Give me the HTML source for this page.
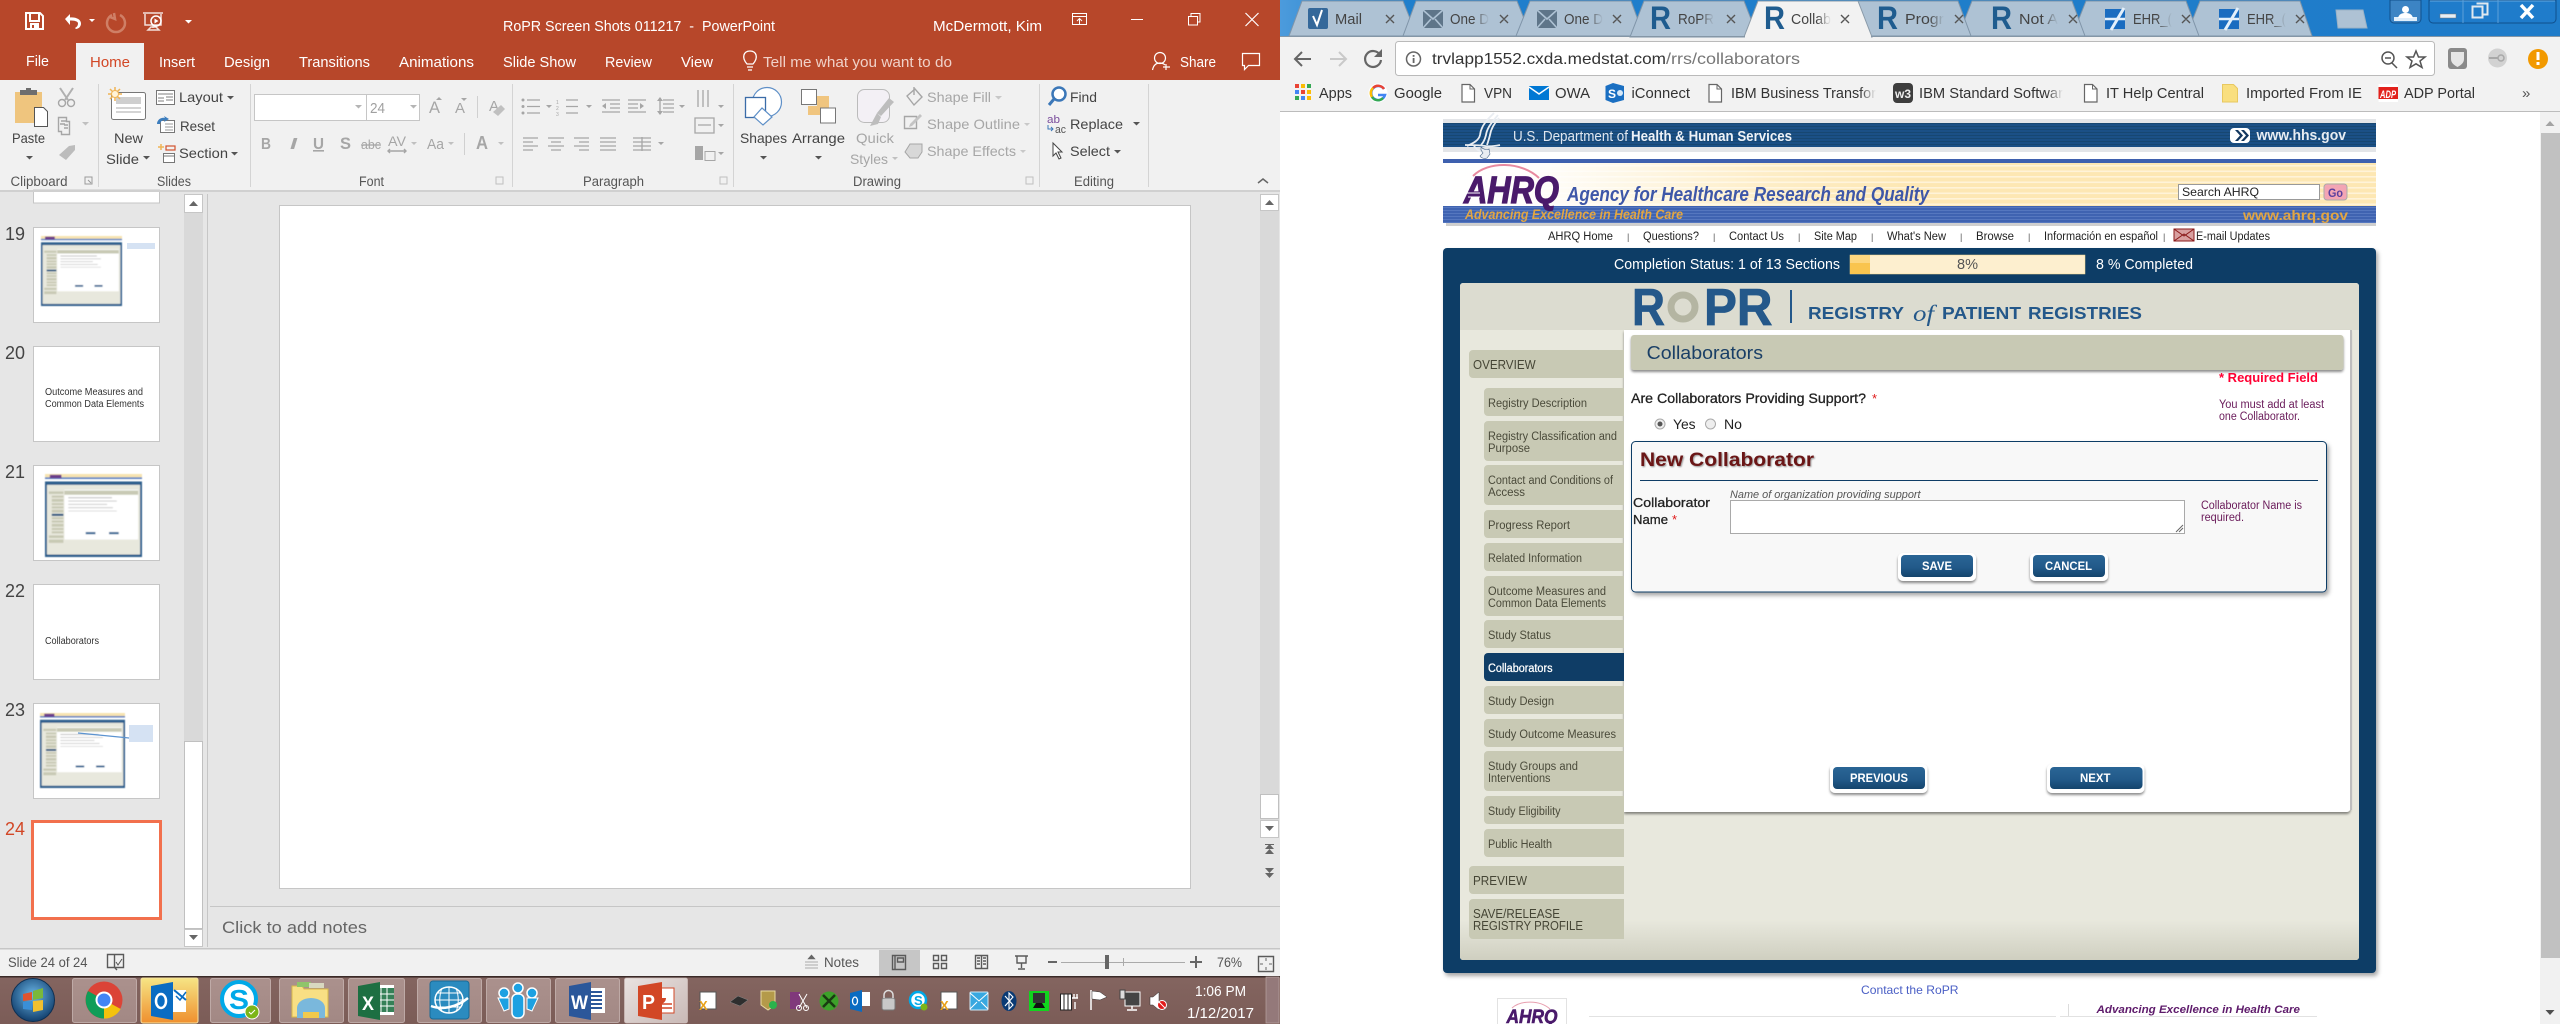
<!DOCTYPE html>
<html lang="en"><head><meta charset="utf-8"><title>RoPR Screen Shots</title>
<style>
html,body{margin:0;padding:0;background:#fff;overflow:hidden;width:2560px;height:1024px}
svg{display:block;font-family:"Liberation Sans",sans-serif}
.w{fill:#fff}.rb{font-size:14px;fill:#444}.dis{font-size:14px;fill:#a6a6a6}.lb{font-size:13.5px;fill:#555}
.tab{font-size:14.5px;fill:#fff}.ct{font-size:14.5px;fill:#444}.bm{font-size:14.5px;fill:#333}
.nav{font-size:11.5px;fill:#222}.sep{font-size:9px;fill:#555}.side{font-size:11.5px;fill:#4a4a3a}.main{font-size:12.5px;fill:#454535}
.btn{font-size:11.5px;font-weight:bold;fill:#fff}.g{fill:#a6a6a6}.ln{fill:none;stroke:#a6a6a6;stroke-width:1.4}.dk{fill:none;stroke:#5a5a5a;stroke-width:1.4}
.num{font-size:18px;fill:#444}.lab{fill:#222;stroke:#222;stroke-width:.3}
</style></head><body>
<svg width="2560" height="1024" viewBox="0 0 2560 1024" xmlns="http://www.w3.org/2000/svg">
<defs>
<linearGradient id="chr" x1="0" x2="1" y1="0" y2="0"><stop offset="0" stop-color="#4c9bdc"/><stop offset=".08" stop-color="#1f7fcc"/><stop offset="1" stop-color="#1f7cc9"/></linearGradient>
<linearGradient id="btn" x1="0" x2="0" y1="0" y2="1"><stop offset="0" stop-color="#2a6595"/><stop offset=".55" stop-color="#225a8a"/><stop offset="1" stop-color="#14446c"/></linearGradient>
<linearGradient id="fade" x1="0" x2="1" y1="0" y2="0"><stop offset="0" stop-color="#aec2d4" stop-opacity="0"/><stop offset="1" stop-color="#aec2d4"/></linearGradient>
<linearGradient id="fadew" x1="0" x2="1" y1="0" y2="0"><stop offset="0" stop-color="#f2f2f2" stop-opacity="0"/><stop offset="1" stop-color="#f2f2f2"/></linearGradient>
<linearGradient id="fadeb" x1="0" x2="1" y1="0" y2="0"><stop offset="0" stop-color="#f2f2f2" stop-opacity="0"/><stop offset="1" stop-color="#f2f2f2"/></linearGradient>
<linearGradient id="yel" x1="0" x2="1" y1="0" y2="0"><stop offset="0" stop-color="#fff"/><stop offset=".1" stop-color="#fff" stop-opacity=".95"/><stop offset=".35" stop-color="#fff" stop-opacity=".25"/><stop offset=".5" stop-color="#fff" stop-opacity="0"/></linearGradient>
<linearGradient id="pbot" x1="0" x2="0" y1="0" y2="1"><stop offset="0" stop-color="#e8e8dd"/><stop offset="1" stop-color="#cfcfc0"/></linearGradient>
<linearGradient id="task" x1="0" x2="0" y1="0" y2="1"><stop offset="0" stop-color="#846560"/><stop offset="1" stop-color="#7b5c57"/></linearGradient>
<linearGradient id="tb" x1="0" x2="0" y1="0" y2="1"><stop offset="0" stop-color="#ab918d"/><stop offset="1" stop-color="#a28884"/></linearGradient>
<linearGradient id="olk" x1="0" x2="0" y1="0" y2="1"><stop offset="0" stop-color="#f6e585"/><stop offset="1" stop-color="#ef8f2e"/></linearGradient>
<linearGradient id="ppb" x1="0" x2="1" y1="0" y2="1"><stop offset="0" stop-color="#e9e2e0"/><stop offset="1" stop-color="#c9b9b6"/></linearGradient>
<radialGradient id="orb" cx=".5" cy=".4" r=".6"><stop offset="0" stop-color="#6bb7e8"/><stop offset="1" stop-color="#123f6d"/></radialGradient>
<pattern id="st" width="8" height="5.5" patternUnits="userSpaceOnUse"><rect width="8" height="5.5" fill="#fde7b3"/><rect y="0" width="8" height="1.6" fill="#fff3d8"/></pattern>
<pattern id="bl" width="8" height="3" patternUnits="userSpaceOnUse"><rect width="8" height="3" fill="#3f63b1"/><rect width="8" height="1" fill="#5577bf"/></pattern>
<pattern id="hh" width="8" height="3" patternUnits="userSpaceOnUse"><rect width="8" height="3" fill="#1b5086"/><rect width="8" height="1" fill="#174772"/></pattern>
<filter id="sd" x="-5%" y="-5%" width="112%" height="115%"><feDropShadow dx="2" dy="3" stdDeviation="2" flood-color="#000" flood-opacity=".35"/></filter>
<filter id="sd2" x="-10%" y="-20%" width="120%" height="150%"><feDropShadow dx="0" dy="2" stdDeviation="1.2" flood-color="#000" flood-opacity=".45"/></filter>
<filter id="ts" x="-5%" y="-20%" width="110%" height="150%"><feDropShadow dx="1" dy="1" stdDeviation=".8" flood-color="#000" flood-opacity=".4"/></filter>
<filter id="bl1"><feGaussianBlur stdDeviation=".5"/></filter>
<filter id="bl2"><feGaussianBlur stdDeviation=".3"/></filter>
<symbol id="mini" viewBox="0 0 100 100" preserveAspectRatio="none">
<rect width="100" height="4" fill="#f7e3b0"/><rect y="4" width="100" height="2" fill="#5b7fc0"/><rect x="5" y="1" width="12" height="4" fill="#6a3a8a"/>
<rect y="9" width="100" height="91" fill="#2d5f8d"/><rect x="2" y="13" width="96" height="84" fill="#e8e8dd"/>
<rect x="20" y="19" width="76" height="60" fill="#fff"/><rect x="20" y="20" width="76" height="5" fill="#c8c9b4"/>
<rect x="4" y="21" width="15" height="3" fill="#c8c9b4"/><rect x="7" y="26" width="12" height="2.5" fill="#c8c9b4"/><rect x="7" y="30" width="12" height="3.5" fill="#c8c9b4"/><rect x="7" y="35" width="12" height="2.5" fill="#c8c9b4"/><rect x="7" y="39" width="12" height="2.5" fill="#c8c9b4"/><rect x="7" y="43" width="12" height="3.5" fill="#c8c9b4"/><rect x="7" y="48" width="12" height="2.5" fill="#1d4f7c"/><rect x="7" y="52" width="12" height="2.5" fill="#c8c9b4"/><rect x="7" y="56" width="12" height="2.5" fill="#c8c9b4"/><rect x="7" y="60" width="12" height="3.5" fill="#c8c9b4"/><rect x="7" y="65" width="12" height="2.5" fill="#c8c9b4"/><rect x="7" y="69" width="12" height="2.5" fill="#c8c9b4"/><rect x="4" y="74" width="15" height="3" fill="#c8c9b4"/><rect x="4" y="79" width="15" height="4" fill="#c8c9b4"/>
<rect x="24" y="28" width="45" height="1.2" fill="#bbb"/><rect x="24" y="32" width="50" height="1.2" fill="#ccc"/><rect x="24" y="36" width="40" height="1.2" fill="#ccc"/><rect x="24" y="40" width="46" height="1.2" fill="#ccc"/><rect x="24" y="44" width="50" height="1.2" fill="#ddd"/>
<rect x="42" y="70" width="10" height="2.5" fill="#2a6090"/><rect x="66" y="70" width="10" height="2.5" fill="#2a6090"/>
</symbol>
</defs>

<!-- POWERPOINT -->
<rect width="1280" height="1024" fill="#e6e6e6"/>
<rect width="1280" height="80" fill="#b7472a"/>
<rect y="80" width="1280" height="110" fill="#f1f1f1"/>
<rect x="76" y="43" width="68" height="38" fill="#f1f1f1"/>
<!-- qat -->
<path d="M26 13h14l3 3v13H26zM30 14v7h9v-7M31 24h7v5h-7z" fill="none" stroke="#fff" stroke-width="2"/>
<rect x="34" y="25" width="3" height="4" class="w"/>
<path d="M65 19l5-5v3.5c6-.5 11 2 11 6 0 3-2 5-5 5.500l-1-1c2-1 3-2.500 3-4.500 0-2.500-4-3-8-3V25z" class="w"/>
<path d="M89 19h6l-3 3z" class="w"/>
<path d="M120 15a9 9 0 1 1-8 0M114 13l1 6-5-2" fill="none" stroke="#cf7f66" stroke-width="2.500"/>
<path d="M143 13h20M145 14v11h16V14M153 25v3M148 30h11l-3-3h-5z" fill="none" stroke="#f3dfd9" stroke-width="1.500"/><circle cx="156" cy="21" r="5" fill="none" stroke="#fff" stroke-width="1.500"/><path d="M154.500 18.500l4 2.500-4 2.500z" class="w"/>
<path d="M185 17h7M185 20h7l-3.500 3.500z" class="w"/>
<text x="503" y="31" class="tab" font-size="15" textLength="272" lengthAdjust="spacingAndGlyphs" xml:space="preserve">RoPR Screen Shots 011217  -  PowerPoint</text>
<text x="933" y="31" class="tab" textLength="109" lengthAdjust="spacingAndGlyphs">McDermott, Kim</text>
<path d="M1072.500 13.500h14v11h-14zM1072.500 16.500h14M1079.500 24v-5M1077 21l2.500-2.500 2.500 2.500" fill="none" stroke="#fff"/>
<rect x="1131" y="19" width="12" height="1" class="w"/>
<path d="M1188.500 16.500h9v8.500h-9zM1191 16.500v-3h9v8.500h-2.500" fill="none" stroke="#fff"/>
<path d="M1245.500 13l13 13M1258.500 13l-13 13" stroke="#fff" stroke-width="1.200"/>
<!-- tabs -->
<text x="26" y="66" class="tab" textLength="23" lengthAdjust="spacingAndGlyphs">File</text>
<text x="90" y="67" font-size="14.500" fill="#d24726" textLength="40" lengthAdjust="spacingAndGlyphs">Home</text>
<text x="159" y="67" class="tab" textLength="36" lengthAdjust="spacingAndGlyphs">Insert</text>
<text x="224" y="67" class="tab" textLength="46" lengthAdjust="spacingAndGlyphs">Design</text>
<text x="299" y="67" class="tab" textLength="71" lengthAdjust="spacingAndGlyphs">Transitions</text>
<text x="399" y="67" class="tab" textLength="75" lengthAdjust="spacingAndGlyphs">Animations</text>
<text x="503" y="67" class="tab" textLength="73" lengthAdjust="spacingAndGlyphs">Slide Show</text>
<text x="605" y="67" class="tab" textLength="47" lengthAdjust="spacingAndGlyphs">Review</text>
<text x="681" y="67" class="tab" textLength="32" lengthAdjust="spacingAndGlyphs">View</text>
<path d="M747 64c-6-7-3-13 3-13s9 6 3 13zM747 67h6M748 70h4" fill="none" stroke="#fff" stroke-width="1.300"/>
<text x="763" y="67" font-size="14.500" fill="#f0d1c8" textLength="189" lengthAdjust="spacingAndGlyphs">Tell me what you want to do</text>
<circle cx="1160" cy="58" r="5.500" fill="none" stroke="#fff" stroke-width="1.200"/><path d="M1152.500 70c1-5 4-7 7.500-7 2 0 3.500.5 5 2M1166 64v6M1163 67h7" fill="none" stroke="#fff" stroke-width="1.200"/>
<text x="1180" y="67" class="tab" textLength="36" lengthAdjust="spacingAndGlyphs">Share</text>
<path d="M1242.500 53.500h17v12h-11l-4 4v-4h-2z" fill="none" stroke="#fff" stroke-width="1.200"/>
<!-- ribbon separators -->
<g fill="#d4d4d4"><rect x="98" y="84" width="1" height="103"/><rect x="250" y="84" width="1" height="103"/><rect x="512" y="84" width="1" height="103"/><rect x="733" y="84" width="1" height="103"/><rect x="1039" y="84" width="1" height="103"/><rect x="1148" y="84" width="1" height="103"/></g>
<text x="10.500" y="186" class="lb" textLength="57" lengthAdjust="spacingAndGlyphs">Clipboard</text>
<text x="157" y="186" class="lb" textLength="34" lengthAdjust="spacingAndGlyphs">Slides</text>
<text x="359" y="186" class="lb" textLength="25" lengthAdjust="spacingAndGlyphs">Font</text>
<text x="583" y="186" class="lb" textLength="61" lengthAdjust="spacingAndGlyphs">Paragraph</text>
<text x="853" y="186" class="lb" textLength="48" lengthAdjust="spacingAndGlyphs">Drawing</text>
<text x="1074" y="186" class="lb" textLength="40" lengthAdjust="spacingAndGlyphs">Editing</text>
<g fill="none" stroke="#9a9a9a"><path d="M85 177h7v7h-7zM88 180l3 3" /><path d="M496 177h7v7h-7z" stroke="#c0c0c0"/><path d="M720 177h7v7h-7z" stroke="#c0c0c0"/><path d="M1026 177h7v7h-7z" stroke="#c0c0c0"/></g>
<!-- clipboard -->
<rect x="15" y="92" width="27" height="31" fill="#efc57e"/><rect x="20" y="90" width="17" height="5" fill="#6e6e6e"/><rect x="26" y="88" width="5" height="4" fill="#6e6e6e"/>
<path d="M34.500 107.500h9l4 4v15h-13z" fill="#fff" stroke="#555"/>
<text x="12" y="143" class="rb" textLength="33" lengthAdjust="spacingAndGlyphs">Paste</text><path d="M26 156h7l-3.500 3.500z" fill="#555"/>
<path d="M60 88l8 12M73 88l-8 12" stroke="#b0b0b0" stroke-width="2"/><circle cx="62" cy="103" r="3.500" class="ln"/><circle cx="71" cy="103" r="3.500" class="ln"/>
<path d="M58.500 117.500h8v4h3v13h-8v-3h-3zM61 121h5M60 124h5M64 125h4M64 128h4" class="ln"/><path d="M82 122h7l-3.500 3.500z" fill="#c0c0c0"/>
<path d="M59 155l10-9 6-1v5l-9 10z" fill="#bcbcbc"/>
<!-- slides -->
<rect x="111.500" y="92.500" width="34" height="27" rx="2" fill="#fff" stroke="#777"/><rect x="116" y="97" width="25" height="7" fill="#cfcfcf"/><path d="M116 108h25M116 112h25" stroke="#aaa"/>
<g stroke="#f0b455" stroke-width="1.500"><path d="M115 87v14M108 94h14M110 89l10 10M120 89l-10 10"/></g><circle cx="115" cy="94" r="3.500" fill="#fff3d8" stroke="#f0b455"/>
<text x="114" y="143" class="rb" textLength="29" lengthAdjust="spacingAndGlyphs">New</text><text x="106" y="164" class="rb" textLength="33" lengthAdjust="spacingAndGlyphs">Slide</text><path d="M143 156h7l-3.500 3.500z" fill="#555"/>
<rect x="156.500" y="90.500" width="18" height="14" fill="#fff" stroke="#777"/><path d="M158 94h15M158 98h6M158 101h6M166 97h7M166 100h7" stroke="#999" stroke-width="1.200"/>
<text x="179" y="102" class="rb" textLength="44" lengthAdjust="spacingAndGlyphs">Layout</text><path d="M227 96h7l-3.500 3.500z" fill="#555"/>
<rect x="160.500" y="120.500" width="14" height="12" fill="#fff" stroke="#777"/><path d="M165 124h8M165 127h8M165 130h8" stroke="#999"/><path d="M157 124c0-4 4-7 8-6l-1-2 5 3-5 3 1-2c-3 0-5 2-5 4z" fill="#3c7dbd"/>
<text x="180" y="131" class="rb" textLength="35" lengthAdjust="spacingAndGlyphs">Reset</text>
<path d="M158 147h6M161 144v6" stroke="#f0b455" stroke-width="1.500"/><rect x="166" y="146" width="9" height="4" fill="none" stroke="#d2522d" stroke-width="1.200"/><rect x="163.500" y="153.500" width="11" height="9" fill="#fff" stroke="#777"/><path d="M164 156h10" stroke="#777"/>
<text x="179" y="158" class="rb" textLength="49" lengthAdjust="spacingAndGlyphs">Section</text><path d="M231 152h7l-3.500 3.500z" fill="#555"/>
<!-- font -->
<rect x="254.500" y="94.500" width="112" height="26" fill="#fff" stroke="#c6c6c6"/><rect x="366.500" y="94.500" width="53" height="26" fill="#fff" stroke="#c6c6c6"/>
<path d="M355 105h7l-3.500 3.500zM410 105h7l-3.500 3.500z" fill="#b5b5b5"/>
<text x="370" y="113" font-size="15" fill="#a0a0a0" textLength="15" lengthAdjust="spacingAndGlyphs">24</text>
<text x="429" y="113" font-size="17" fill="#a6a6a6" textLength="11" lengthAdjust="spacingAndGlyphs">A</text><path d="M436 100l3-3 3 3z" class="g"/>
<text x="455" y="113" font-size="15" fill="#a6a6a6" textLength="10" lengthAdjust="spacingAndGlyphs">A</text><path d="M461 98h6l-3 3z" class="g"/>
<rect x="477" y="96" width="1" height="22" fill="#d0d0d0"/>
<text x="489" y="111" font-size="15" fill="#a6a6a6">A</text><path d="M493 112l8-7 4 4-7 7z" fill="#c0c0c0"/>
<text x="261" y="149" font-size="16" font-weight="bold" fill="#a6a6a6" textLength="10" lengthAdjust="spacingAndGlyphs">B</text>
<text x="290" y="149" font-size="16" font-weight="bold" font-style="italic" fill="#a6a6a6" textLength="7" lengthAdjust="spacingAndGlyphs">I</text>
<text x="313" y="149" font-size="16" font-weight="bold" fill="#a6a6a6" text-decoration="underline" textLength="11" lengthAdjust="spacingAndGlyphs">U</text>
<text x="340" y="149" font-size="17" font-weight="bold" fill="#a6a6a6" textLength="11" lengthAdjust="spacingAndGlyphs">S</text>
<text x="361" y="149" font-size="13" fill="#a6a6a6" text-decoration="line-through" textLength="20" lengthAdjust="spacingAndGlyphs">abc</text>
<text x="388" y="146" font-size="14" fill="#a6a6a6" textLength="18" lengthAdjust="spacingAndGlyphs">AV</text><path d="M388 151h18M390 149l-2 2 2 2M404 149l2 2-2 2" class="ln" stroke-width="1"/><path d="M411 142h6l-3 3z" fill="#c0c0c0"/>
<text x="427" y="149" font-size="15" fill="#a6a6a6" textLength="17" lengthAdjust="spacingAndGlyphs">Aa</text><path d="M448 142h6l-3 3z" fill="#c0c0c0"/>
<rect x="464" y="133" width="1" height="22" fill="#d0d0d0"/>
<text x="476" y="149" font-size="18" font-weight="bold" fill="#a6a6a6" textLength="12" lengthAdjust="spacingAndGlyphs">A</text><path d="M498 142h6l-3 3z" fill="#c0c0c0"/>
<!-- paragraph -->
<g fill="none" stroke="#a6a6a6" stroke-width="1.300">
<path d="M527 100h13M527 106.500h13M527 113h13M566 100h12M566 106.500h12M566 113h12"/>
<path d="M602 100h18M610 104h10M610 108h10M602 112h18M628 100h18M628 104h10M628 108h10M628 112h18"/>
<path d="M663 100h11M663 104h11M663 108h11M663 112h11M660 98v16"/>
<path d="M523 138h15M523 142h10M523 146h15M523 150h10M548 138h16M551 142h10M548 146h16M551 150h10M574 138h15M579 142h10M574 146h15M579 150h10M600 138h16M600 142h16M600 146h16M600 150h16"/>
<path d="M633 138h18M633 142h18M633 146h18M633 150h18M642 137v14"/>
<path d="M698 90v17M703 90v17M708 90v17"/><path d="M695 118h19v15h-19zM698 125h13"/>
</g>
<g fill="#a6a6a6"><circle cx="523" cy="100" r="1.500"/><circle cx="523" cy="106.500" r="1.500"/><circle cx="523" cy="113" r="1.500"/>
<path d="M546 105h6l-3 3zM586 105h6l-3 3zM679 105h6l-3 3zM718 105h6l-3 3zM718 124h6l-3 3zM718 152h6l-3 3zM658 142h6l-3 3z"/>
<path d="M606 103l-4 3 4 3zM640 103l4 3-4 3zM660 97l-3 4h6zM660 115l-3-4h6z"/>
<rect x="695" y="146" width="8" height="14"/><rect x="705" y="151.500" width="10" height="9" fill="#f1f1f1" stroke="#a6a6a6"/></g>
<text x="556" y="104" font-size="5" fill="#a6a6a6">1</text><text x="556" y="110" font-size="5" fill="#a6a6a6">2</text><text x="556" y="116" font-size="5" fill="#a6a6a6">3</text>
<!-- drawing -->
<circle cx="767" cy="102" r="14.500" fill="#fff" stroke="#5e8fc7" stroke-width="1.200"/>
<rect x="745.500" y="97.500" width="20" height="20" fill="#fff" stroke="#3b6ca8" stroke-width="1.300"/>
<path d="M762 108l10 9-9 8-9-8z" fill="#fff" stroke="#5e8fc7" stroke-width="1.200"/>
<text x="740" y="143" class="rb" textLength="47" lengthAdjust="spacingAndGlyphs">Shapes</text><path d="M760 156h7l-3.500 3.500z" fill="#555"/>
<rect x="801.500" y="89.500" width="15" height="15" fill="#fff" stroke="#777"/><rect x="817" y="96" width="12" height="12" fill="#f0c57f"/><rect x="808" y="106" width="12" height="9" fill="#f0c57f"/><rect x="820.500" y="108" width="15" height="15" fill="#fff" stroke="#777"/>
<text x="792" y="143" class="rb" textLength="53" lengthAdjust="spacingAndGlyphs">Arrange</text><path d="M815 156h7l-3.500 3.500z" fill="#555"/>
<rect x="857.500" y="89.500" width="32" height="33" rx="7" fill="#f3f0f5" stroke="#bbb"/><path d="M894 102l-13 14-4-3 12-15zM877 113l4 4-3 7-8 2z" fill="#bdbdbd"/>
<text x="856" y="143" class="dis" textLength="38" lengthAdjust="spacingAndGlyphs">Quick</text><text x="850" y="164" class="dis" textLength="38" lengthAdjust="spacingAndGlyphs">Styles</text><path d="M892 157h6l-3 3z" fill="#c0c0c0"/>
<path d="M907 96l8-7 7 8-8 8z" class="ln"/><path d="M914 87v8" class="ln"/>
<text x="927" y="102" class="dis" textLength="64" lengthAdjust="spacingAndGlyphs">Shape Fill</text><path d="M995 96h7l-3.500 3.500z" fill="#c8c8c8"/>
<path d="M904.500 116.500h12v12h-12z" class="ln"/><path d="M910 124l10-10 2 2-10 10-3 1z" fill="#c4c4c4"/>
<text x="927" y="129" class="dis" textLength="93" lengthAdjust="spacingAndGlyphs">Shape Outline</text><path d="M1024 123h6l-3 3z" fill="#c8c8c8"/>
<path d="M905 152l5-8h12v8l-4 6h-8z" fill="#d8d8d8" stroke="#a6a6a6"/>
<text x="927" y="156" class="dis" textLength="89" lengthAdjust="spacingAndGlyphs">Shape Effects</text><path d="M1020 150h6l-3 3z" fill="#c8c8c8"/>
<!-- editing -->
<circle cx="1059" cy="94" r="6.500" fill="#fff" stroke="#3b77b8" stroke-width="2.500"/><path d="M1054 99l-5 6" stroke="#3b77b8" stroke-width="3"/>
<text x="1070" y="102" class="rb" textLength="27" lengthAdjust="spacingAndGlyphs">Find</text>
<text x="1047" y="123" font-size="11" fill="#7a4d9c" textLength="13" lengthAdjust="spacingAndGlyphs">ab</text><text x="1055" y="133" font-size="11" fill="#555" textLength="11" lengthAdjust="spacingAndGlyphs">ac</text><path d="M1048 125v4h5M1051 127l2 2-2 2" fill="none" stroke="#3b77b8"/>
<text x="1070" y="129" class="rb" textLength="53" lengthAdjust="spacingAndGlyphs">Replace</text><path d="M1133 122h7l-3.500 3.500z" fill="#555"/>
<path d="M1053 143v13l3-3 3 6 2-1-3-6h4z" fill="#fff" stroke="#444"/>
<text x="1070" y="156" class="rb" textLength="40" lengthAdjust="spacingAndGlyphs">Select</text><path d="M1114 150h7l-3.500 3.500z" fill="#555"/>
<path d="M1258 183l5-4 5 4" fill="none" stroke="#666" stroke-width="1.500"/>

<!-- left thumbnails -->
<rect x="33.500" y="190" width="126" height="13" fill="#fff" stroke="#c6c6c6"/>
<rect y="190" x="0" width="1280" height="2" fill="#d0d0d0"/>
<g fill="#fff" stroke="#c6c6c6"><rect x="33.500" y="227.500" width="126" height="95"/><rect x="33.500" y="346.500" width="126" height="95"/><rect x="33.500" y="465.500" width="126" height="95"/><rect x="33.500" y="584.500" width="126" height="95"/><rect x="33.500" y="703.500" width="126" height="95"/></g>
<rect x="32.500" y="821.500" width="128" height="97" fill="#fff" stroke="#f2704d" stroke-width="3"/>
<use href="#mini" x="41" y="236" width="81" height="70" filter="url(#bl1)"/><rect x="127" y="243" width="28" height="6" fill="#d5e2f3"/>
<use href="#mini" x="45" y="474" width="97" height="83" filter="url(#bl1)"/>
<use href="#mini" x="40" y="713" width="85" height="75" filter="url(#bl1)"/><rect x="129" y="725" width="24" height="17" fill="#d5e2f3"/><path d="M78 733l51 5" stroke="#5b93d0" stroke-width="1.200"/>
<g filter="url(#bl2)"><text x="45" y="395" font-size="10" fill="#333" textLength="98" lengthAdjust="spacingAndGlyphs">Outcome Measures and</text>
<text x="45" y="407" font-size="10" fill="#333" textLength="99" lengthAdjust="spacingAndGlyphs">Common Data Elements</text>
<text x="45" y="644" font-size="10" fill="#333" textLength="54" lengthAdjust="spacingAndGlyphs">Collaborators</text></g>
<text x="5" y="240" class="num" textLength="20" lengthAdjust="spacingAndGlyphs">19</text><text x="5" y="359" class="num" textLength="20" lengthAdjust="spacingAndGlyphs">20</text><text x="5" y="478" class="num" textLength="20" lengthAdjust="spacingAndGlyphs">21</text><text x="5" y="597" class="num" textLength="20" lengthAdjust="spacingAndGlyphs">22</text><text x="5" y="716" class="num" textLength="20" lengthAdjust="spacingAndGlyphs">23</text><text x="5" y="835" font-size="18" fill="#d24726" textLength="20" lengthAdjust="spacingAndGlyphs">24</text>
<!-- left scrollbar -->
<rect x="184" y="194" width="19" height="753" fill="#d9d9d9"/>
<rect x="184.500" y="194.500" width="18" height="18" fill="#fff" stroke="#c6c6c6"/><path d="M189 206l4.500-5 4.500 5z" fill="#666"/>
<rect x="184.500" y="741.500" width="18" height="187" fill="#fff" stroke="#c0c0c0"/>
<rect x="184.500" y="929.500" width="18" height="17" fill="#fff" stroke="#c6c6c6"/><path d="M189 935h9l-4.500 5z" fill="#666"/>
<rect x="207" y="194" width="1" height="753" fill="#c6c6c6"/>
<!-- main slide -->
<rect x="279.500" y="205.500" width="911" height="683" fill="#fff" stroke="#c6c6c6"/>
<rect x="210" y="906" width="1070" height="1" fill="#c6c6c6"/>
<text x="222" y="933" font-size="16.500" fill="#666" textLength="145" lengthAdjust="spacingAndGlyphs">Click to add notes</text>
<!-- right scroll -->
<rect x="1260" y="194" width="19" height="644" fill="#d9d9d9"/>
<rect x="1260.500" y="194.500" width="18" height="16" fill="#fff" stroke="#c6c6c6"/><path d="M1265 205l4.500-5 4.500 5z" fill="#666"/>
<rect x="1260.500" y="794.500" width="18" height="24" fill="#fff" stroke="#c0c0c0"/>
<rect x="1260.500" y="820.500" width="18" height="17" fill="#fff" stroke="#c6c6c6"/><path d="M1265 826h9l-4.500 5z" fill="#666"/>
<path d="M1265 849l4.500-5 4.500 5zM1265 854l4.500-5 4.500 5zM1265 868h9l-4.500 5zM1265 873h9l-4.500 5z" fill="#666"/><rect x="1265" y="844" width="9" height="1" fill="#666"/>
<!-- status -->
<rect y="949" width="1280" height="27" fill="#f1f1f1"/><rect y="948" width="1280" height="1.500" fill="#c6c6c6"/>
<text x="8" y="967" class="lb" textLength="79.500" lengthAdjust="spacingAndGlyphs">Slide 24 of 24</text>
<path d="M107.500 954.500h7v13h-7zM114.500 954.500h9v13h-9M115 968l2 2" class="dk" stroke-width="1"/><path d="M116 962l2 3 4-6" fill="none" stroke="#555"/>
<path d="M805 962h13M805 965h13M805 968h13M808 959l3.500-4 3.500 4z" fill="#666" stroke="#666" stroke-width=".6"/>
<text x="824" y="967" class="lb" textLength="35" lengthAdjust="spacingAndGlyphs">Notes</text>
<rect x="879" y="950" width="41" height="26" fill="#c6c6c6"/>
<path d="M892.500 955.500h13v14h-13zM895 955v14M897.500 958h6v4h-6z" class="dk" stroke-width="1"/>
<path d="M933.500 955.500h5v5h-5zM941.500 955.500h5v5h-5zM933.500 963.500h5v5h-5zM941.500 963.500h5v5h-5z" class="dk" stroke-width="1"/>
<path d="M975.500 955.500h12v13h-12zM981.500 955v14M977 958h3M977 961h3M977 964h3M983 958h3M983 961h3M983 964h3" class="dk" stroke-width="1"/>
<path d="M1015 956h13M1017 956v7h9v-7M1021.500 963v5M1018 969h7" class="dk" stroke-width="1.300"/>
<rect x="1048" y="961" width="9" height="2" fill="#666"/><rect x="1061" y="962" width="124" height="1" fill="#aaa"/><rect x="1105" y="955" width="4" height="14" fill="#666"/><rect x="1123" y="958" width="1" height="8" fill="#aaa"/><path d="M1196 956v12M1190 962h12" stroke="#666" stroke-width="2"/>
<text x="1217" y="967" class="lb" textLength="25" lengthAdjust="spacingAndGlyphs">76%</text>
<path d="M1258.500 956.500h15v15h-15z" class="dk" stroke-width="1"/><path d="M1266 958v3M1266 967v3M1260 964h3M1269 964h3" stroke="#666"/>
<!-- taskbar -->
<rect y="976" width="1280" height="48" fill="url(#task)"/><rect y="976" width="1280" height="1.500" fill="#3a2a28"/>
<circle cx="33" cy="1000" r="21.500" fill="url(#orb)" stroke="#0d2f52"/><path d="M23 994l9-2v8l-9 1z" fill="#e0532e"/><path d="M33 991l10-3v10l-10 2z" fill="#7ab83a"/><path d="M23 1002l9-1v9l-9-1z" fill="#3a8fd8"/><path d="M33 1001l10-1v10l-10 2z" fill="#f0c030"/>
<g stroke="#d0bfbc" stroke-opacity=".7"><rect x="72.500" y="978.500" width="64" height="44" rx="2" fill="url(#tb)"/><rect x="210.500" y="978.500" width="60" height="44" rx="2" fill="url(#tb)"/><rect x="279.500" y="978.500" width="64" height="44" rx="2" fill="url(#tb)"/><rect x="348.500" y="978.500" width="56" height="44" rx="2" fill="url(#tb)"/><rect x="417.500" y="978.500" width="64" height="44" rx="2" fill="url(#tb)"/><rect x="486.500" y="978.500" width="64" height="44" rx="2" fill="url(#tb)"/><rect x="555.500" y="978.500" width="64" height="44" rx="2" fill="url(#tb)"/><rect x="624.500" y="978" width="63" height="45" rx="2" fill="url(#ppb)"/></g>
<rect x="141" y="978" width="57" height="45" rx="2" fill="url(#olk)" stroke="#f7e3a0"/>
<!-- chrome icon -->
<circle cx="104" cy="1000" r="18.500" fill="#db4437"/><path d="M104 1000l16.500 9a18.500 18.500 0 0 1-16.500 9.500z" fill="#f4c20d"/><path d="M104 1000l-16 -9a18.500 18.500 0 0 0 16 27.500z" fill="#0f9d58"/><path d="M104 1000v18.500a18.500 18.500 0 0 0 16.500-9.500z" fill="#f4c20d"/><circle cx="104" cy="1000" r="8.500" fill="#fff"/><circle cx="104" cy="1000" r="6.500" fill="#4285f4"/>
<!-- outlook -->
<path d="M172 990h14v22h-14z" fill="#fff"/><path d="M151 986l22-4v38l-22-4z" fill="#0a6cc2"/><ellipse cx="161" cy="1001" rx="5" ry="7" fill="none" stroke="#fff" stroke-width="2.500"/><path d="M174 990l12 10" fill="none" stroke="#0a6cc2" stroke-width="2"/><path d="M176 996l4 4 6-8" fill="none" stroke="#0a6cc2" stroke-width="1.500"/>
<!-- skype -->
<circle cx="239" cy="999" r="17" fill="#fff" stroke="#00a9e8" stroke-width="4"/><text x="229" y="1009" font-size="28" font-weight="bold" fill="#00a9e8" textLength="20" lengthAdjust="spacingAndGlyphs">S</text><circle cx="252" cy="1012" r="7" fill="#7cb518" stroke="#fff"/><path d="M249 1012l2 2 4-4" fill="none" stroke="#fff"/>
<!-- explorer -->
<path d="M292 986h10l2 3h24v28h-36z" fill="#f8df84" stroke="#d8b94a"/><rect x="297" y="982" width="14" height="5" fill="#8fc46a"/><rect x="309" y="983" width="15" height="5" fill="#d8d8c0"/><path d="M297 1018v-10a14 10 0 0 1 28 0v10h-6v-6h-16v6z" fill="#7ab8dc"/><rect x="303" y="1012" width="16" height="6" fill="#f2c94c"/>
<!-- excel -->
<rect x="374" y="985" width="20" height="30" fill="#fff"/><path d="M376 988h18v24h-18z" fill="#1f7245" opacity=".9"/><path d="M381 988v24M387 988v24M376 994h18M376 1000h18M376 1006h18" stroke="#fff"/><path d="M358 986l22-4v38l-22-4z" fill="#1d6f42"/><text x="362" y="1010" font-size="19" font-weight="bold" fill="#fff" textLength="12" lengthAdjust="spacingAndGlyphs">X</text>
<!-- globe -->
<rect x="430" y="981" width="39" height="38" rx="3" fill="#2b8bbf" stroke="#1a6a95"/><ellipse cx="449" cy="1000" rx="14" ry="13" fill="none" stroke="#fff" stroke-width="1.500"/><path d="M435 1000h28M437 993h24M437 1007h24M449 987v26M442 988c-3 8-3 16 0 24M456 988c3 8 3 16 0 24" stroke="#fff" fill="none"/><path d="M431 1006c10 4 25 2 37-8" fill="none" stroke="#fff" stroke-width="2.500"/>
<!-- lync -->
<circle cx="518" cy="988" r="5" fill="#1da1e2" stroke="#fff" stroke-width="1.500"/><circle cx="504" cy="993" r="5" fill="#1da1e2" stroke="#fff" stroke-width="1.500"/><circle cx="532" cy="993" r="5" fill="#1da1e2" stroke="#fff" stroke-width="1.500"/><path d="M498 998h11v11l-5 2zM538 998h-11v11l5 2z" fill="#1da1e2" stroke="#fff"/><rect x="512" y="994" width="12" height="24" rx="5" fill="#1da1e2" stroke="#fff" stroke-width="1.500"/>
<!-- word -->
<rect x="585" y="988" width="20" height="25" fill="#fff"/><path d="M588 992h14M588 996h14M588 1000h14M588 1004h14M588 1008h14" stroke="#2b579a" stroke-width="2"/><path d="M569 986l22-4v38l-22-4z" fill="#2b579a"/><text x="571" y="1009" font-size="19" font-weight="bold" fill="#fff" textLength="17" lengthAdjust="spacingAndGlyphs">W</text>
<!-- ppt -->
<rect x="655" y="988" width="19" height="25" fill="#fff" stroke="#d24726"/><path d="M659 1004h13M659 1008h13" stroke="#d24726" stroke-width="1.500"/><path d="M660 992a6 6 0 1 0 6 6h-6z" fill="#d24726"/><path d="M638 986l24-4v38l-24-4z" fill="#d24726"/><text x="642" y="1009" font-size="20" font-weight="bold" fill="#fff" textLength="13" lengthAdjust="spacingAndGlyphs">P</text>
<!-- tray -->
<g>
<rect x="700" y="992" width="16" height="17" fill="#fff" stroke="#555"/><text x="699" y="1010" font-size="13" font-weight="bold" fill="#e8a21c">X</text>
<path d="M730 1002l8-6 10 4-8 6z" fill="#2e2e2e" stroke="#888" stroke-width=".5"/>
<path d="M761 991h14v14l-7 5-7-5z" fill="#b49a4a" stroke="#e8d9a0"/><circle cx="773" cy="1005" r="4" fill="#2bb24c"/>
<rect x="790" y="992" width="10" height="17" fill="#80397b"/><path d="M799 994l8 14M807 994l-8 14" stroke="#fff"/><circle cx="799" cy="1008" r="2.500" fill="none" stroke="#fff"/><circle cx="806" cy="1008" r="2.500" fill="none" stroke="#fff"/>
<circle cx="829" cy="1001" r="9.500" fill="#3da12a"/><path d="M823 995l12 12M835 995l-12 12" stroke="#1a3a12" stroke-width="2.500"/>
<rect x="862" y="992" width="8" height="14" fill="#fff"/><path d="M850 993l12-3v22l-12-3z" fill="#0a6cc2"/><ellipse cx="855" cy="1001" rx="2.500" ry="4" fill="none" stroke="#fff" stroke-width="1.300"/>
<rect x="882" y="998" width="13" height="12" rx="2" fill="#c8c8c8" stroke="#777"/><path d="M884 998v-3a4.500 4.500 0 0 1 9 0v3" fill="none" stroke="#ddd" stroke-width="1.500"/>
<circle cx="918" cy="1000" r="8" fill="#fff" stroke="#00a9e8" stroke-width="2.500"/><text x="914" y="1005" font-size="13" font-weight="bold" fill="#00a9e8">S</text><circle cx="924" cy="1007" r="3.500" fill="#7cb518"/>
<rect x="941" y="992" width="16" height="17" fill="#fff" stroke="#555"/><text x="940" y="1010" font-size="13" font-weight="bold" fill="#e8a21c">X</text>
<rect x="970" y="992" width="18" height="18" rx="1" fill="#38a8e0" stroke="#cfe7f5"/><path d="M970 993l9 8 9-8M970 1009l7-7M988 1009l-7-7" fill="none" stroke="#fff"/>
<ellipse cx="1009" cy="1001" rx="7.500" ry="10" fill="#0a3a74"/><path d="M1005 996l8 9-4 4v-16l4 4-8 9" fill="none" stroke="#fff" stroke-width="1.100"/>
<rect x="1029" y="991" width="20" height="20" fill="#11d41e"/><rect x="1033" y="993" width="12" height="10" fill="#333"/><path d="M1036 1003h6l3 5h-12z" fill="#111"/>
<path d="M1060.500 994h11v16h-11z" fill="#fff" stroke="#222"/><path d="M1064 994v16M1068 994v16" stroke="#222"/><path d="M1072 998h6M1074 994v4M1077 994v4M1075 1002v7" stroke="#fff" stroke-width="1.400"/>
<path d="M1091 990v20" stroke="#fff" stroke-width="1.500"/><path d="M1092 991l8 1 7 5-7 3-8-1z" fill="#fff" stroke="#333" stroke-width=".5"/>
<rect x="1125" y="992" width="15" height="14" fill="#444" stroke="#fff"/><rect x="1120" y="990" width="5" height="9" fill="#ddd" stroke="#444"/><path d="M1132 1006v3M1127 1010h10" stroke="#fff" stroke-width="1.500"/>
<path d="M1150 997h3l6-5v18l-6-5h-3z" fill="#fff" stroke="#333" stroke-width=".5"/><circle cx="1162" cy="1005" r="4.500" fill="#e21a1a" stroke="#fff"/><path d="M1159 1002l6 6" stroke="#fff"/>
</g>
<text x="1195" y="996" font-size="14.500" class="w" textLength="51" lengthAdjust="spacingAndGlyphs">1:06 PM</text>
<text x="1187" y="1018" font-size="14.500" class="w" textLength="67" lengthAdjust="spacingAndGlyphs">1/12/2017</text>
<rect x="1266" y="977" width="13" height="46" fill="#94797a" stroke="#b9a4a1" stroke-width=".7"/>

<!-- CHROME -->
<rect x="1280" width="1280" height="36" fill="url(#chr)"/>
<rect x="1280" y="36" width="1280" height="75" fill="#f2f2f2"/><rect x="1280" y="111" width="1280" height="1" fill="#bcbcbc"/>
<g fill="#aec2d4" stroke="#7f94a8">
<path d="M2312 36l-12-35h-100l-14 35z"/><path d="M2199 36l-13-35h-100l-14 35z"/><path d="M2085 36l-13-35h-100l-14 35z"/><path d="M1971 36l-13-35h-100l-14 35z"/>
<path d="M1417 36l-14-35h-101l-13 35z"/><path d="M1531 36l-14-35h-101l-13 35z"/><path d="M1644 36l-13-35h-101l-14 35z"/>
</g>
<path d="M1758 37l-14-36h-100l-14 36z" fill="#aec2d4" stroke="#7f94a8"/>
<path d="M1872 37l-14-36h-100l-14 36z" fill="#f2f2f2" stroke="#8a9aa8"/>
<path d="M2336 10h27l4 18h-29z" fill="#aec2d4" stroke="#9bb2c6"/>
<rect x="1280" y="36" width="1280" height="1" fill="#8496a6"/><rect x="1745" y="36" width="126" height="1.500" fill="#f2f2f2"/>
<!-- favicons -->
<rect x="1308" y="8" width="20" height="21" rx="2" fill="#34689a"/><path d="M1313 16l4 9 5-15" fill="none" stroke="#fff" stroke-width="2"/>
<g fill="#5e7589"><rect x="1423" y="10" width="20" height="18"/><rect x="1537" y="10" width="20" height="18"/></g>
<path d="M1423 10l10 9 10-9M1423 28l8-9M1443 28l-8-9M1537 10l10 9 10-9M1537 28l8-9M1557 28l-8-9" fill="none" stroke="#aec2d4" stroke-width="1.600"/>
<g font-size="32" font-weight="bold" fill="#1f5c8f"><text x="1650" y="29" textLength="21" lengthAdjust="spacingAndGlyphs">R</text><text x="1764" y="29" textLength="21" lengthAdjust="spacingAndGlyphs">R</text><text x="1877" y="29" textLength="21" lengthAdjust="spacingAndGlyphs">R</text><text x="1991" y="29" textLength="21" lengthAdjust="spacingAndGlyphs">R</text></g>
<rect x="2105" y="9" width="20" height="20" fill="#1a6cc0"/><rect x="2219" y="9" width="20" height="20" fill="#1a6cc0"/>
<path d="M2105 19h20M2219 19h20" stroke="#e4f0fb" stroke-width="2.500"/><path d="M2124 8l-13 22M2238 8l-13 22" stroke="#e4f0fb" stroke-width="3"/>
<!-- tab titles -->
<g font-size="14.500" fill="#444">
<text x="1335" y="24" textLength="27" lengthAdjust="spacingAndGlyphs">Mail</text>
<text x="1450" y="24" textLength="39" lengthAdjust="spacingAndGlyphs">One D</text>
<text x="1564" y="24" textLength="39" lengthAdjust="spacingAndGlyphs">One D</text>
<text x="1678" y="24" textLength="36" lengthAdjust="spacingAndGlyphs">RoPR</text>
<text x="1791" y="24" textLength="40" lengthAdjust="spacingAndGlyphs">Collab</text>
<text x="1905" y="24" textLength="39" lengthAdjust="spacingAndGlyphs">Progr</text>
<text x="2019" y="24" textLength="39" lengthAdjust="spacingAndGlyphs">Not A</text>
<text x="2133" y="24" textLength="39" lengthAdjust="spacingAndGlyphs">EHR_(</text>
<text x="2247" y="24" textLength="39" lengthAdjust="spacingAndGlyphs">EHR_(</text>
</g>
<g fill="url(#fade)"><rect x="1474" y="8" width="15" height="22"/><rect x="1588" y="8" width="15" height="22"/><rect x="1700" y="8" width="14" height="22"/><rect x="1929" y="8" width="15" height="22"/><rect x="2043" y="8" width="15" height="22"/><rect x="2157" y="8" width="15" height="22"/><rect x="2271" y="8" width="15" height="22"/></g>
<rect x="1817" y="8" width="14" height="22" fill="url(#fadew)"/>
<g stroke="#555" stroke-width="1.400">
<path d="M1386 15l8 8M1394 15l-8 8M1500 15l8 8M1508 15l-8 8M1613 15l8 8M1621 15l-8 8M1727 15l8 8M1735 15l-8 8M1841 15l8 8M1849 15l-8 8M1955 15l8 8M1963 15l-8 8M2069 15l8 8M2077 15l-8 8M2182 15l8 8M2190 15l-8 8M2296 15l8 8M2304 15l-8 8"/>
</g>
<!-- window controls -->
<path d="M2390 0v19a4 4 0 0 0 4 4h23a4 4 0 0 0 4-4V0z" fill="#3c84c4" stroke="#0f4f8c"/><path d="M2394 17h23v4h-23z" fill="#dfeefb"/>
<circle cx="2405.500" cy="9.500" r="3.500" class="w"/><path d="M2398 18c1-4 4-5 7.500-5s6.500 1 7.500 5z" class="w"/>
<path d="M2429 0v19a4 4 0 0 0 4 4h119a4 4 0 0 0 4-4V0z" fill="#1f7ccb" stroke="#0f4f8c"/><path d="M2430 1h125" stroke="#63a9e2"/><path d="M2463 0v23M2498 0v23" stroke="#5c9fd8"/>
<rect x="2440" y="14" width="16" height="4" fill="#e6eef5" stroke="#777" stroke-width=".5"/>
<path d="M2472.500 6.500h10v11h-10zM2476.500 3.500h11v11h-5" fill="none" stroke="#e0e8ef" stroke-width="2"/>
<path d="M2521 5l12 13M2533 5l-12 13" stroke="#fff" stroke-width="3.500"/>
<!-- toolbar -->
<path d="M1311 59h-15M1302 52l-7 7 7 7" fill="none" stroke="#666" stroke-width="2"/>
<path d="M1330 59h15M1339 52l7 7-7 7" fill="none" stroke="#c9c9c9" stroke-width="2"/>
<path d="M1380 55a8 8 0 1 0 1 5" fill="none" stroke="#666" stroke-width="2.200"/><path d="M1382 49v8h-8z" fill="#666"/>
<rect x="1395.500" y="41.500" width="1039" height="34" rx="3" fill="#fff" stroke="#bababa"/>
<circle cx="1413.500" cy="59" r="7" fill="none" stroke="#666" stroke-width="1.500"/><rect x="1412.700" y="58" width="1.800" height="5" fill="#666"/><rect x="1412.700" y="55" width="1.800" height="1.800" fill="#666"/>
<text x="1432" y="64" font-size="16" fill="#333" textLength="234" lengthAdjust="spacingAndGlyphs">trvlapp1552.cxda.medstat.com</text>
<text x="1666" y="64" font-size="16" fill="#777" textLength="134" lengthAdjust="spacingAndGlyphs">/rrs/collaborators</text>
<circle cx="2388" cy="58" r="6" fill="none" stroke="#555" stroke-width="1.500"/><path d="M2392 63l5 5M2385 58h6" stroke="#555" stroke-width="1.500"/>
<path d="M2416 51l2.500 6h6.500l-5 4 2 6.500-6-3.700-6 3.700 2-6.500-5-4h6.500z" fill="none" stroke="#555" stroke-width="1.500"/>
<rect x="2448" y="48" width="19" height="21" rx="3" fill="#8a8a8a"/><path d="M2451 52h13v7c0 4-3 6-6.500 8-3.500-2-6.500-4-6.500-8z" fill="#e6e6e6"/>
<circle cx="2497.500" cy="58" r="9.500" fill="#d2d2d2"/><path d="M2489 58h9" stroke="#a8a8a8" stroke-width="2"/><circle cx="2501" cy="58" r="3" fill="none" stroke="#a8a8a8" stroke-width="1.500"/>
<circle cx="2538" cy="59" r="10" fill="#f29900"/><rect x="2536.500" y="52" width="3" height="8" class="w"/><rect x="2536.500" y="62" width="3" height="3" class="w"/>
<!-- bookmarks -->
<g><rect x="1295" y="84" width="4" height="4" fill="#ea4335"/><rect x="1301" y="84" width="4" height="4" fill="#fbbc05"/><rect x="1307" y="84" width="4" height="4" fill="#34a853"/><rect x="1295" y="90" width="4" height="4" fill="#4285f4"/><rect x="1301" y="90" width="4" height="4" fill="#ea4335"/><rect x="1307" y="90" width="4" height="4" fill="#fbbc05"/><rect x="1295" y="96" width="4" height="4" fill="#34a853"/><rect x="1301" y="96" width="4" height="4" fill="#4285f4"/><rect x="1307" y="96" width="4" height="4" fill="#fbbc05"/></g>
<text x="1319" y="98" class="bm" textLength="33" lengthAdjust="spacingAndGlyphs">Apps</text>
<circle cx="1378" cy="93" r="9.500" class="w"/><path d="M1384 89a7 7 0 1 0 1 6h-7" fill="none" stroke="#4285f4" stroke-width="2.500"/><path d="M1384 89a7 7 0 0 0-11-1" fill="none" stroke="#ea4335" stroke-width="2.500"/><path d="M1373 88a7 7 0 0 0-1 9" fill="none" stroke="#fbbc05" stroke-width="2.500"/><path d="M1372 97a7 7 0 0 0 11 1" fill="none" stroke="#34a853" stroke-width="2.500"/>
<text x="1394" y="98" class="bm" textLength="48" lengthAdjust="spacingAndGlyphs">Google</text>
<g fill="#fff" stroke="#666" stroke-width="1.200"><path d="M1462 84.500h8l4.500 4.500v13h-12.500z"/><path d="M1709 84.500h8l4.500 4.500v13h-12.500z"/><path d="M2084.500 84.500h8l4.500 4.500v13h-12.500z"/></g>
<g fill="none" stroke="#666"><path d="M1470 84.500v4.500h4.500M1717 84.500v4.500h4.500M2092.500 84.500v4.500h4.500"/></g>
<text x="1484" y="98" class="bm" textLength="28" lengthAdjust="spacingAndGlyphs">VPN</text>
<rect x="1529" y="86" width="20" height="14" fill="#0078d4"/><path d="M1529 87l10 7 10-7" fill="none" stroke="#fff" stroke-width="1.500"/>
<text x="1555" y="98" class="bm" textLength="35" lengthAdjust="spacingAndGlyphs">OWA</text>
<path d="M1613 83l11 3v14l-11 3-7.500-3V86z" fill="#1a6fc2"/><text x="1608" y="98" font-size="12" font-weight="bold" fill="#fff">S</text><circle cx="1620" cy="93" r="3" fill="#d6e8f8"/>
<text x="1631.500" y="98" class="bm" textLength="58.500" lengthAdjust="spacingAndGlyphs">iConnect</text>
<text x="1731" y="98" class="bm" textLength="145" lengthAdjust="spacingAndGlyphs">IBM Business Transfor</text><rect x="1860" y="82" width="16" height="20" fill="url(#fadeb)"/>
<rect x="1893" y="83" width="20" height="20" rx="4" fill="#3e3e3e"/><text x="1895" y="98" font-size="12" font-weight="bold" fill="#eee" textLength="16" lengthAdjust="spacingAndGlyphs">w3</text>
<text x="1919" y="98" class="bm" textLength="144" lengthAdjust="spacingAndGlyphs">IBM Standard Softwar</text><rect x="2047" y="82" width="16" height="20" fill="url(#fadeb)"/>
<text x="2106" y="98" class="bm" textLength="98" lengthAdjust="spacingAndGlyphs">IT Help Central</text>
<path d="M2222.500 84.500h11l4 4v13.500h-15z" fill="#f9df7f" stroke="#e8c860"/>
<text x="2246" y="98" class="bm" textLength="116" lengthAdjust="spacingAndGlyphs">Imported From IE</text>
<rect x="2378.500" y="84" width="19.500" height="18" class="w"/><rect x="2378.500" y="87" width="19.500" height="12" fill="#e2211c"/><text x="2380" y="98" font-size="11" font-weight="bold" font-style="italic" fill="#fff" textLength="16" lengthAdjust="spacingAndGlyphs">ADP</text>
<text x="2404" y="98" class="bm" textLength="71" lengthAdjust="spacingAndGlyphs">ADP Portal</text>
<text x="2522" y="98" font-size="15" fill="#555">»</text>

<!-- PAGE -->
<rect x="1280" y="112" width="1260" height="912" class="w"/>
<rect x="2540" y="112" width="20" height="912" fill="#f1f1f1"/><path d="M2545.500 126l4.500-5 4.500 5z" fill="#a3a3a3"/><rect x="2541" y="133" width="19" height="825" fill="#c1c1c1"/><path d="M2545.500 1010h9l-4.500 5z" fill="#505050"/>
<!-- hhs banner -->
<rect x="1443" y="119" width="933" height="33" fill="#e3e5e8"/>
<rect x="1443" y="123" width="933" height="24" fill="url(#hh)"/>
<rect x="1443" y="152" width="933" height="7" class="w"/>
<text x="1513" y="141" font-size="14.500" fill="#dfe6ef" textLength="115" lengthAdjust="spacingAndGlyphs">U.S. Department of</text>
<text x="1631" y="141" font-size="14.500" font-weight="bold" fill="#eef2f7" textLength="161" lengthAdjust="spacingAndGlyphs">Health &amp; Human Services</text>
<text x="2256.500" y="140" font-size="14.500" font-weight="bold" fill="#e8edf3" textLength="89.500" lengthAdjust="spacingAndGlyphs">www.hhs.gov</text>
<rect x="2230" y="128" width="20" height="15" rx="4" class="w"/><path d="M2235 130l5 5.500-5 5.500h3l5-5.500-5-5.500zM2241 130l5 5.500-5 5.500h3l5-5.500-5-5.500z" fill="#12375f"/>
<!-- eagle -->
<g fill="none" stroke="#e9edf2" stroke-width="1.800"><path d="M1494 113c-5 5-13 12-14 22-1 5-6 8-13 11"/><path d="M1498 115c-4 5-11 12-12 20-1 4-3 8-5 10"/><path d="M1499 118c-4 5-8 10-9 17-1 4-2 7-3 10"/><path d="M1465 145c7 0 14 0 20 1 5 1 10 0 15-1"/><path d="M1474 146c2 3 5 5 8 6"/></g><path d="M1481 147c3 3 7 3 8 2l1 5-3 4c-3 1-6 0-7-2l3-3-2-3z" fill="#e9edf2" stroke="#4a6688" stroke-width=".6"/>
<rect x="1443" y="159" width="933" height="4" fill="#3e60ae"/>
<!-- ahrq -->
<rect x="1443" y="163" width="933" height="43" fill="url(#st)"/><rect x="1443" y="163" width="933" height="43" fill="url(#yel)"/>
<rect x="1443" y="206" width="933" height="17" fill="url(#bl)"/><rect x="1446" y="223" width="930" height="3" fill="#cfcfcf"/>
<path d="M1473 176c15-15 48-15 66 2" fill="none" stroke="#e88aa0" stroke-width="2"/>
<text x="1464" y="203" font-size="38" font-weight="bold" font-style="italic" fill="#4a1a6b" stroke="#4a1a6b" stroke-width="1.300" textLength="95" lengthAdjust="spacingAndGlyphs">AHRQ</text>
<path d="M1466 193h14M1468 197h12" stroke="#fff" stroke-width="1"/>
<text x="1567" y="201" font-size="20" font-weight="bold" font-style="italic" fill="#3e57a8" textLength="362" lengthAdjust="spacingAndGlyphs">Agency for Healthcare Research and Quality</text>
<text x="1465" y="219" font-size="13.500" font-weight="bold" font-style="italic" fill="#e2a643" textLength="218" lengthAdjust="spacingAndGlyphs">Advancing Excellence in Health Care</text>
<text x="2243" y="220" font-size="14" font-weight="bold" fill="#e2a643" textLength="105" lengthAdjust="spacingAndGlyphs">www.ahrq.gov</text>
<rect x="2178.500" y="184.500" width="141" height="15" fill="#fff" stroke="#999"/>
<text x="2182" y="196" font-size="12" fill="#222" textLength="77" lengthAdjust="spacingAndGlyphs">Search AHRQ</text>
<rect x="2324" y="184" width="23" height="16" rx="3" fill="#f3a5b4" stroke="#aaa"/><text x="2328" y="197" font-size="12" font-weight="bold" fill="#5a3f9e" textLength="15" lengthAdjust="spacingAndGlyphs">Go</text>
<!-- nav -->
<text x="1548" y="240" class="nav" textLength="65" lengthAdjust="spacingAndGlyphs">AHRQ Home</text><text x="1627" y="240" class="sep">|</text>
<text x="1643" y="240" class="nav" textLength="56" lengthAdjust="spacingAndGlyphs">Questions?</text><text x="1713" y="240" class="sep">|</text>
<text x="1729" y="240" class="nav" textLength="55" lengthAdjust="spacingAndGlyphs">Contact Us</text><text x="1798" y="240" class="sep">|</text>
<text x="1814" y="240" class="nav" textLength="43" lengthAdjust="spacingAndGlyphs">Site Map</text><text x="1871" y="240" class="sep">|</text>
<text x="1887" y="240" class="nav" textLength="59" lengthAdjust="spacingAndGlyphs">What's New</text><text x="1960" y="240" class="sep">|</text>
<text x="1976" y="240" class="nav" textLength="38" lengthAdjust="spacingAndGlyphs">Browse</text><text x="2028" y="240" class="sep">|</text>
<text x="2044" y="240" class="nav" textLength="114" lengthAdjust="spacingAndGlyphs">Información en español</text><text x="2163" y="240" class="sep">|</text>
<rect x="2174" y="229" width="20" height="12" fill="#d8a0a0" stroke="#8a1a1a"/><path d="M2174 229l10 7 10-7M2174 241l10-7 10 7" fill="none" stroke="#8a1a1a"/>
<text x="2196" y="240" class="nav" textLength="74" lengthAdjust="spacingAndGlyphs">E-mail Updates</text>
<!-- main container -->
<rect x="1443" y="248" width="933" height="725" rx="4" fill="#0f3d66" filter="url(#sd)"/>
<text x="1614" y="269" font-size="14.500" class="w" textLength="226" lengthAdjust="spacingAndGlyphs">Completion Status: 1 of 13 Sections</text>
<rect x="1850" y="255" width="235" height="19" fill="#fdefcf" stroke="#f9d88a" stroke-width=".5"/><rect x="1850" y="255" width="20" height="19" fill="#f9c44e"/><rect x="1850" y="255" width="20" height="8" fill="#fcd67f"/>
<text x="1957" y="269" font-size="14.500" fill="#555" textLength="21" lengthAdjust="spacingAndGlyphs">8%</text>
<text x="2096" y="269" font-size="14.500" class="w" textLength="97" lengthAdjust="spacingAndGlyphs">8 % Completed</text>
<!-- inner panel -->
<rect x="1460" y="283" width="899" height="677" rx="3" fill="#e8e8dd"/>
<path d="M1460 330v-44a3 3 0 0 1 3-3h893a3 3 0 0 1 3 3v44z" fill="#dcdcd0"/>
<path d="M1460 920h899v37a3 3 0 0 1-3 3h-893a3 3 0 0 1-3-3z" fill="url(#pbot)"/>
<text x="1632" y="325" font-size="52" font-weight="bold" fill="#24588a" stroke="#24588a" stroke-width=".8" textLength="33" lengthAdjust="spacingAndGlyphs">R</text>
<circle cx="1683" cy="307" r="12" fill="none" stroke="#b4b5a2" stroke-width="7"/>
<text x="1704" y="325" font-size="52" font-weight="bold" fill="#24588a" stroke="#24588a" stroke-width=".8" textLength="68.500" lengthAdjust="spacingAndGlyphs">PR</text>
<rect x="1790" y="290" width="2" height="33" fill="#24588a"/>
<text x="1808" y="319" font-size="17.500" font-weight="bold" fill="#24588a" textLength="96" lengthAdjust="spacingAndGlyphs">REGISTRY</text>
<text x="1913" y="321" font-size="23" font-style="italic" font-family="Liberation Serif" fill="#24588a" textLength="21" lengthAdjust="spacingAndGlyphs">of</text>
<text x="1942" y="319" font-size="17.500" font-weight="bold" fill="#24588a" textLength="79" lengthAdjust="spacingAndGlyphs">PATIENT</text>
<text x="2028" y="319" font-size="17.500" font-weight="bold" fill="#24588a" textLength="114" lengthAdjust="spacingAndGlyphs">REGISTRIES</text>
<!-- white content -->
<path d="M1624 330h726.500v478a4 4 0 0 1-4 4H1624z" fill="#fff" filter="url(#sd2)"/>
<rect x="2350" y="330" width="2" height="480" fill="#bdbdbd"/>
<!-- sidebar -->
<g fill="#c8c9b4">
<path d="M1624 350h-151a4 4 0 0 0-4 4v20a4 4 0 0 0 4 4h151zM1624 866h-151a4 4 0 0 0-4 4v20a4 4 0 0 0 4 4h151zM1624 899h-151a4 4 0 0 0-4 4v32a4 4 0 0 0 4 4h151z"/>
<path d="M1624 388h-136a4 4 0 0 0-4 4v20a4 4 0 0 0 4 4h136zM1624 421h-136a4 4 0 0 0-4 4v32a4 4 0 0 0 4 4h136zM1624 465h-136a4 4 0 0 0-4 4v32a4 4 0 0 0 4 4h136zM1624 510h-136a4 4 0 0 0-4 4v20a4 4 0 0 0 4 4h136zM1624 543h-136a4 4 0 0 0-4 4v20a4 4 0 0 0 4 4h136zM1624 576h-136a4 4 0 0 0-4 4v32a4 4 0 0 0 4 4h136zM1624 620h-136a4 4 0 0 0-4 4v20a4 4 0 0 0 4 4h136z"/>
<path d="M1624 686h-136a4 4 0 0 0-4 4v20a4 4 0 0 0 4 4h136zM1624 719h-136a4 4 0 0 0-4 4v20a4 4 0 0 0 4 4h136zM1624 751h-136a4 4 0 0 0-4 4v32a4 4 0 0 0 4 4h136zM1624 796h-136a4 4 0 0 0-4 4v20a4 4 0 0 0 4 4h136zM1624 829h-136a4 4 0 0 0-4 4v20a4 4 0 0 0 4 4h136z"/>
</g>
<path d="M1624 653h-136a4 4 0 0 0-4 4v20a4 4 0 0 0 4 4h136z" fill="#0f3d66"/>
<text x="1473" y="369" class="main" textLength="62.600" lengthAdjust="spacingAndGlyphs">OVERVIEW</text>
<text x="1473" y="885" class="main" textLength="54" lengthAdjust="spacingAndGlyphs">PREVIEW</text>
<text x="1473" y="918" class="main" textLength="87" lengthAdjust="spacingAndGlyphs">SAVE/RELEASE</text>
<text x="1473" y="930" class="main" textLength="110" lengthAdjust="spacingAndGlyphs">REGISTRY PROFILE</text>
<text x="1488" y="407" class="side" textLength="99" lengthAdjust="spacingAndGlyphs">Registry Description</text>
<text x="1488" y="440" class="side" textLength="129" lengthAdjust="spacingAndGlyphs">Registry Classification and</text>
<text x="1488" y="452" class="side" textLength="42" lengthAdjust="spacingAndGlyphs">Purpose</text>
<text x="1488" y="484" class="side" textLength="125" lengthAdjust="spacingAndGlyphs">Contact and Conditions of</text>
<text x="1488" y="496" class="side" textLength="37" lengthAdjust="spacingAndGlyphs">Access</text>
<text x="1488" y="529" class="side" textLength="82" lengthAdjust="spacingAndGlyphs">Progress Report</text>
<text x="1488" y="562" class="side" textLength="94" lengthAdjust="spacingAndGlyphs">Related Information</text>
<text x="1488" y="595" class="side" textLength="118" lengthAdjust="spacingAndGlyphs">Outcome Measures and</text>
<text x="1488" y="607" class="side" textLength="118" lengthAdjust="spacingAndGlyphs">Common Data Elements</text>
<text x="1488" y="639" class="side" textLength="63" lengthAdjust="spacingAndGlyphs">Study Status</text>
<text x="1488" y="672" font-size="11.500" class="w" stroke="#fff" stroke-width=".25" textLength="64.500" lengthAdjust="spacingAndGlyphs">Collaborators</text>
<text x="1488" y="705" class="side" textLength="66" lengthAdjust="spacingAndGlyphs">Study Design</text>
<text x="1488" y="738" class="side" textLength="128" lengthAdjust="spacingAndGlyphs">Study Outcome Measures</text>
<text x="1488" y="770" class="side" textLength="90" lengthAdjust="spacingAndGlyphs">Study Groups and</text>
<text x="1488" y="782" class="side" textLength="62.500" lengthAdjust="spacingAndGlyphs">Interventions</text>
<text x="1488" y="815" class="side" textLength="72.500" lengthAdjust="spacingAndGlyphs">Study Eligibility</text>
<text x="1488" y="848" class="side" textLength="64" lengthAdjust="spacingAndGlyphs">Public Health</text>
<!-- header -->
<rect x="1631" y="335" width="712.500" height="35" rx="3" fill="#c8c9b4" filter="url(#sd2)"/>
<text x="1646.600" y="359" font-size="18.500" fill="#1a3f66" textLength="116.400" lengthAdjust="spacingAndGlyphs">Collaborators</text>
<!-- form -->
<text x="1631" y="403" font-size="13.500" class="lab" textLength="235" lengthAdjust="spacingAndGlyphs">Are Collaborators Providing Support?</text>
<text x="1872" y="403" font-size="13" fill="#e01a1a">*</text>
<circle cx="1660" cy="424" r="5" fill="#eee" stroke="#aaa"/><circle cx="1660" cy="424" r="2.500" fill="#555"/>
<text x="1673" y="429" font-size="13.500" fill="#222" textLength="22.600" lengthAdjust="spacingAndGlyphs">Yes</text>
<circle cx="1710.500" cy="424" r="5" fill="#eee" stroke="#aaa"/>
<text x="1724" y="429" font-size="13.500" fill="#222" textLength="18" lengthAdjust="spacingAndGlyphs">No</text>
<text x="2219" y="382" font-size="13" font-weight="bold" fill="#ff0033" textLength="99" lengthAdjust="spacingAndGlyphs">* Required Field</text>
<text x="2219" y="408" font-size="11.500" fill="#6a1b5a" textLength="105" lengthAdjust="spacingAndGlyphs">You must add at least</text>
<text x="2219" y="420" font-size="11.500" fill="#6a1b5a" textLength="81" lengthAdjust="spacingAndGlyphs">one Collaborator.</text>
<!-- new collaborator -->
<rect x="1631.500" y="441.500" width="695" height="150.500" rx="4" fill="#f8f8f8" stroke="#0f3d66" filter="url(#sd)"/>
<text x="1640" y="466" font-size="19.500" font-weight="bold" fill="#6b1515" filter="url(#ts)" textLength="174" lengthAdjust="spacingAndGlyphs">New Collaborator</text>
<rect x="1640" y="480" width="678" height="1" fill="#0f3d66"/>
<text x="1730" y="498" font-size="11" font-style="italic" fill="#555" textLength="190.600" lengthAdjust="spacingAndGlyphs">Name of organization providing support</text>
<text x="1633" y="507" font-size="13" class="lab" textLength="77" lengthAdjust="spacingAndGlyphs">Collaborator</text>
<text x="1633" y="524" font-size="13" class="lab" textLength="35" lengthAdjust="spacingAndGlyphs">Name</text>
<text x="1672" y="524" font-size="13" fill="#e01a1a">*</text>
<rect x="1730.500" y="500.500" width="454" height="33" fill="#fff" stroke="#a9a9a9"/><path d="M2176 532l7-7M2179 532l4-4" stroke="#666"/>
<text x="2201" y="509" font-size="11.500" fill="#6a1b5a" textLength="101" lengthAdjust="spacingAndGlyphs">Collaborator Name is</text>
<text x="2201" y="521" font-size="11.500" fill="#6a1b5a" textLength="43" lengthAdjust="spacingAndGlyphs">required.</text>
<!-- buttons -->
<rect x="1898" y="553" width="78" height="28" rx="5" class="w" filter="url(#sd2)"/><rect x="1901" y="555" width="72" height="22" rx="4" fill="url(#btn)"/>
<text x="1922" y="570" class="btn" textLength="30" lengthAdjust="spacingAndGlyphs">SAVE</text>
<rect x="2030" y="553" width="78" height="28" rx="5" class="w" filter="url(#sd2)"/><rect x="2033" y="555" width="72" height="22" rx="4" fill="url(#btn)"/>
<text x="2045" y="570" class="btn" textLength="47" lengthAdjust="spacingAndGlyphs">CANCEL</text>
<rect x="1830" y="764" width="97.500" height="29" rx="5" class="w" filter="url(#sd2)"/><rect x="1833" y="767" width="92" height="22" rx="4" fill="url(#btn)"/>
<text x="1850" y="782" class="btn" textLength="58" lengthAdjust="spacingAndGlyphs">PREVIOUS</text>
<rect x="2047" y="764" width="97.500" height="29" rx="5" class="w" filter="url(#sd2)"/><rect x="2050" y="767" width="92.500" height="22" rx="4" fill="url(#btn)"/>
<text x="2080" y="782" class="btn" textLength="30.500" lengthAdjust="spacingAndGlyphs">NEXT</text>
<!-- footer -->
<text x="1861" y="994" font-size="12" fill="#4a5fc5" textLength="97.500" lengthAdjust="spacingAndGlyphs">Contact the RoPR</text>
<path d="M1497.500 1024v-25.500h69v25.500" fill="none" stroke="#e2e2e2"/>
<path d="M1512 1008c9-8 28-8 38 1" fill="none" stroke="#e8a0b0"/>
<text x="1506.500" y="1023" font-size="19" font-weight="bold" font-style="italic" fill="#4a1a6b" stroke="#4a1a6b" stroke-width=".6" textLength="51" lengthAdjust="spacingAndGlyphs">AHRQ</text>
<rect x="1589" y="1016" width="467" height="1" fill="#e2e2e2"/><rect x="2060" y="1016" width="257" height="1" fill="#e2e2e2"/><rect x="2068" y="1004" width="1" height="12" fill="#dcdcdc"/>
<text x="2096.500" y="1013" font-size="11" font-weight="bold" font-style="italic" fill="#5e1b6b" textLength="203.500" lengthAdjust="spacingAndGlyphs">Advancing Excellence in Health Care</text>
</svg>
</body></html>
